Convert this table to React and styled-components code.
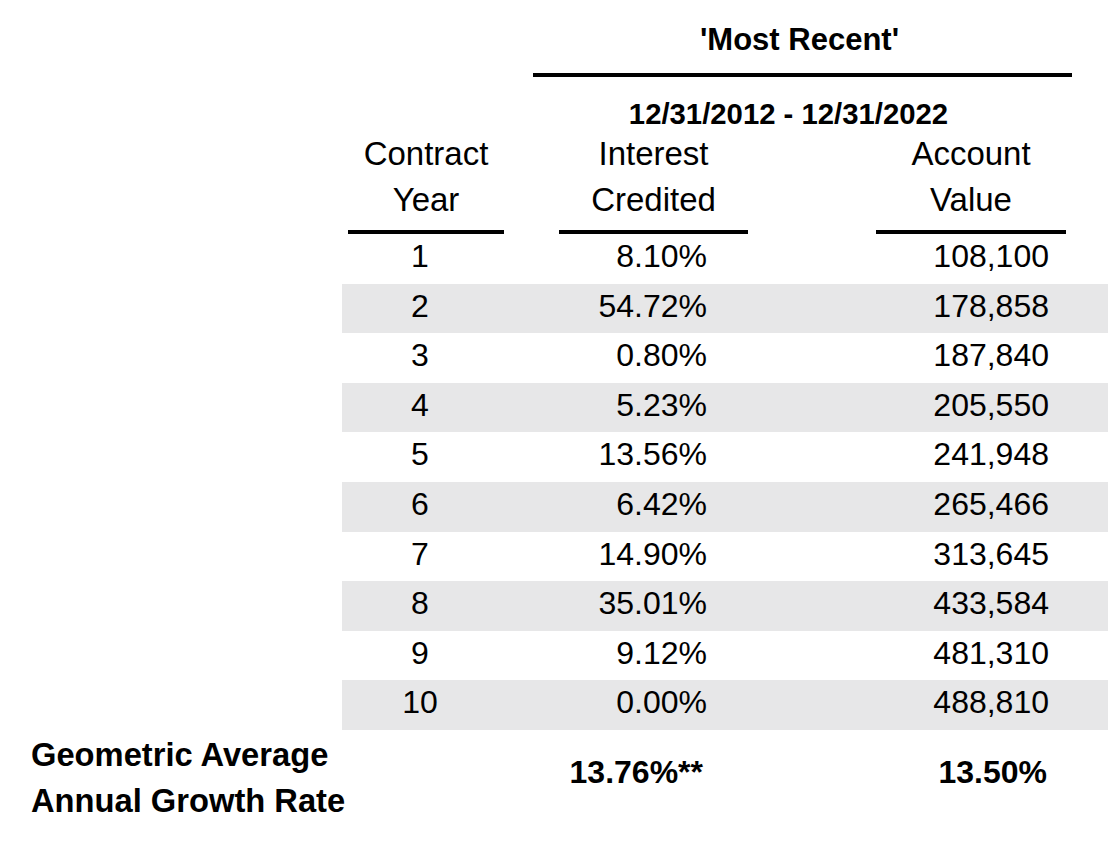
import styled, { createGlobalStyle } from "styled-components";

const GlobalStyle = createGlobalStyle`
  html, body {
    margin: 0;
    background: #fff;
  }
  body {
    font-family: "Liberation Sans", Arial, Helvetica, sans-serif;
    color: #000;
  }
`;

const Page = styled.div`
  width: 1108px;
  height: 845px;
  overflow: hidden;
`;

// 'Most Recent' banner over the two value columns
const Banner = styled.div`
  margin-left: 533px;
  width: 539px;
  padding-top: 22px;
`;

const Title = styled.div`
  font-size: 31px;
  font-weight: 700;
  line-height: 36px;
  text-align: center;
  padding-right: ${p => p.shift}px;
  margin-bottom: ${p => p.after}px;
`;

const TopRule = styled.div`
  height: 4px;
  background: #000;
`;

const DateRange = styled.div`
  margin-top: 20px;
  font-size: 29.3px;
  font-weight: 700;
  line-height: 34px;
  text-align: center;
  padding-right: ${p => p.shift}px;
`;

const Heads = styled.div`
  display: flex;
  margin-left: 348px;
`;

const HeadCell = styled.div`
  width: ${p => p.w}px;
  margin-left: ${p => p.gap || 0}px;
  font-size: 33px;
  line-height: 46px;
  text-align: center;
  white-space: nowrap;
`;

const HeadRule = styled.div`
  height: 4px;
  margin-top: 7px;
  background: #000;
`;

const Body = styled.div`
  margin-left: 342px;
`;

const Row = styled.div`
  display: grid;
  grid-template-columns: 156px 209px 342px 1fr;
  height: 49.6px;
  box-sizing: border-box;
  padding-bottom: 4px;
  font-size: 32px;
  line-height: 45.6px;
  background: ${p => (p.shaded ? "#e7e7e8" : "transparent")};
`;

const Cell = styled.div`
  text-align: ${p => p.align || "right"};
`;

const Footer = styled.div`
  display: grid;
  grid-template-columns: 342px 156px 209px 342px;
  margin-top: 2px;
  font-size: 32px;
  font-weight: 700;
  line-height: 46px;
`;

const FooterLabel = styled.div`
  padding-left: 31px;
  font-size: 32.7px;
  white-space: nowrap;
`;

const FooterValue = styled.div`
  padding-top: 17px;
  text-align: right;
  padding-right: ${p => p.trim}px;
  white-space: nowrap;
`;

const rows = [
  [1, "8.10%", "108,100"],
  [2, "54.72%", "178,858"],
  [3, "0.80%", "187,840"],
  [4, "5.23%", "205,550"],
  [5, "13.56%", "241,948"],
  [6, "6.42%", "265,466"],
  [7, "14.90%", "313,645"],
  [8, "35.01%", "433,584"],
  [9, "9.12%", "481,310"],
  [10, "0.00%", "488,810"],
];

export default function App() {
  return (
    <Page>
      <GlobalStyle />
      <Banner>
        <Title shift={6} after={15}>'Most Recent'</Title>
        <TopRule />
        <DateRange shift={28}>12/31/2012 - 12/31/2022</DateRange>
      </Banner>
      <Heads>
        <HeadCell w={156}>
          Contract<br />Year
          <HeadRule />
        </HeadCell>
        <HeadCell w={189} gap={55}>
          Interest<br />Credited
          <HeadRule />
        </HeadCell>
        <HeadCell w={190} gap={128}>
          Account<br />Value
          <HeadRule />
        </HeadCell>
      </Heads>
      <Body>
        {rows.map(([year, rate, value]) => (
          <Row key={year} shaded={year % 2 === 0}>
            <Cell align="center">{year}</Cell>
            <Cell>{rate}</Cell>
            <Cell>{value}</Cell>
          </Row>
        ))}
      </Body>
      <Footer>
        <FooterLabel>
          Geometric Average<br />Annual Growth Rate
        </FooterLabel>
        <div />
        <FooterValue trim={4}>13.76%**</FooterValue>
        <FooterValue trim={2}>13.50%</FooterValue>
      </Footer>
    </Page>
  );
}
